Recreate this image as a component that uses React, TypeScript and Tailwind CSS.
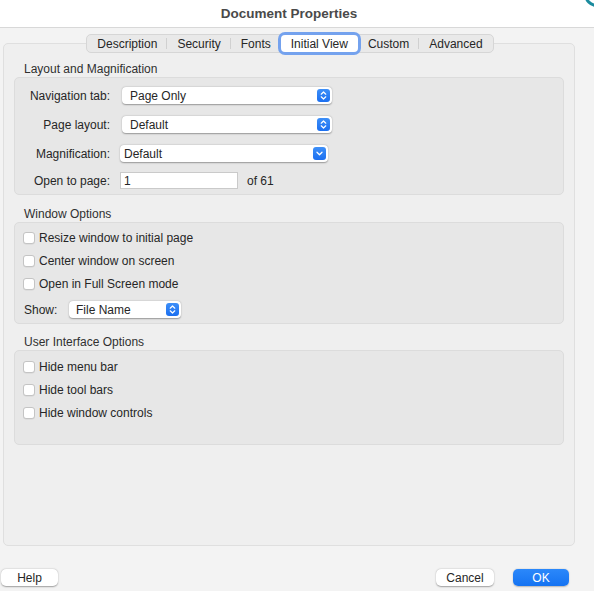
import type { ReactNode } from 'react';

const tabs = ['Description', 'Security', 'Fonts', 'Initial View', 'Custom', 'Advanced'];
const activeTab = 'Initial View';

function UpDownIcon() {
  return (
    <span className="flex h-[13px] w-[13px] items-center justify-center rounded-[3px] bg-gradient-to-b from-[#3d8ff8] to-[#1b6ff0]">
      <svg width="7" height="9" viewBox="0 0 7 9" fill="none">
        <path d="M1.2 3.2 L3.5 1 L5.8 3.2" stroke="white" strokeWidth="1.2" strokeLinecap="round" strokeLinejoin="round" />
        <path d="M1.2 5.8 L3.5 8 L5.8 5.8" stroke="white" strokeWidth="1.2" strokeLinecap="round" strokeLinejoin="round" />
      </svg>
    </span>
  );
}

function DownIcon() {
  return (
    <span className="flex h-[13px] w-[13px] items-center justify-center rounded-[3px] bg-gradient-to-b from-[#3d8ff8] to-[#1b6ff0]">
      <svg width="7" height="5" viewBox="0 0 7 5" fill="none">
        <path d="M1 1.3 L3.5 3.7 L6 1.3" stroke="white" strokeWidth="1.3" strokeLinecap="round" strokeLinejoin="round" />
      </svg>
    </span>
  );
}

function Select({ value, width, down, pad = 'pl-[8px]' }: { value: string; width: string; down?: boolean; pad?: string }) {
  return (
    <div
      className={`flex h-[17px] ${width} items-center justify-between rounded-[4px] bg-white ${pad} pr-[2px] shadow-[0_0.5px_1.5px_rgba(0,0,0,0.35)]`}
    >
      <span className="text-[12px] text-[#262626]">{value}</span>
      {down ? <DownIcon /> : <UpDownIcon />}
    </div>
  );
}

function Checkbox({ label, className = '' }: { label: string; className?: string }) {
  return (
    <div className={`flex h-[14px] items-center ${className}`}>
      <span className="h-[12px] w-[12px] rounded-[3px] border border-[#c4c4c4] bg-white shadow-[0_0.5px_0.5px_rgba(0,0,0,0.08)]" />
      <span className="ml-[4px] text-[12px] text-[#262626]">{label}</span>
    </div>
  );
}

function FieldRow({ label, children, className = '' }: { label: string; children: ReactNode; className?: string }) {
  return (
    <div className={`flex h-[17px] items-center ${className}`}>
      <span className="w-[95px] text-right text-[12px] text-[#262626]">{label}</span>
      {children}
    </div>
  );
}

function Group({ title, children, className = '' }: { title: string; children: ReactNode; className?: string }) {
  return (
    <div className={className}>
      <div className="ml-[10px] h-[14px] text-[12px] leading-[14px] text-[#303030]">{title}</div>
      <div className="mt-[1px] rounded-[5px] border border-[#dcdcdc] bg-[#e7e7e7]">{children}</div>
    </div>
  );
}

export default function App() {
  return (
    <div className="relative flex h-[591px] w-[594px] flex-col overflow-hidden bg-[#f3f3f3] font-['Liberation_Sans',Arial,sans-serif]">
      {/* stray window corner */}
      <div className="absolute right-[-16px] top-[-19px] h-[26px] w-[26px] rounded-full border-[3px] border-[#1b8b9e]" />

      {/* Title bar */}
      <div className="flex h-[28px] items-center justify-center border-b border-[#d8d8d8] bg-white pr-[16px] pt-[1px]">
        <span className="text-[13.5px] font-bold text-[#4a4a4a]">Document Properties</span>
      </div>

      {/* Tabs */}
      <div className="relative z-10 mt-[6px] -mb-[10px] flex justify-center pr-[14px]">
        <div className="flex h-[19px] items-center rounded-[5px] border border-[#d6d6d6] bg-[#e9e9e9]">
          {tabs.map((t, i) => {
            const isActive = t === activeTab;
            const nextActive = tabs[i + 1] === activeTab;
            const showSep = i < tabs.length - 1 && !isActive && !nextActive;
            return (
              <div key={t} className="relative flex h-full items-center">
                <span
                  className={`flex h-full items-center px-[10px] text-[12px] text-[#262626] ${
                    isActive ? 'rounded-[4px] bg-white ring-[3px] ring-[#74a2ee]' : ''
                  }`}
                >
                  {t}
                </span>
                {showSep && <span className="absolute right-0 h-[11px] w-px bg-[#d0d0d0]" />}
              </div>
            );
          })}
        </div>
      </div>

      {/* Tab panel */}
      <div className="ml-[3px] h-[503px] w-[572px] rounded-[5px] border border-[#dfdfdf] bg-[#efefef] px-[10px] pt-[18px]">
        <Group title="Layout and Magnification">
          <div className="h-[116px] pt-[9px]">
            <FieldRow label="Navigation tab:">
              <div className="ml-[12px]">
                <Select value="Page Only" width="w-[210px]" />
              </div>
            </FieldRow>
            <FieldRow label="Page layout:" className="mt-[12px]">
              <div className="ml-[12px]">
                <Select value="Default" width="w-[210px]" />
              </div>
            </FieldRow>
            <FieldRow label="Magnification:" className="mt-[12px]">
              <div className="ml-[10px]">
                <Select value="Default" width="w-[208px]" down pad="pl-[4px]" />
              </div>
            </FieldRow>
            <FieldRow label="Open to page:" className="mt-[10px]">
              <div className="ml-[10px] flex h-[17px] w-[118px] items-center border border-[#cacaca] bg-white pl-[3px] text-[12px] text-[#262626]">
                1
              </div>
              <span className="ml-[9px] text-[12px] text-[#262626]">of 61</span>
            </FieldRow>
          </div>
        </Group>

        <Group title="Window Options" className="mt-[12px]">
          <div className="h-[100px] pl-[8px] pt-[8px]">
            <Checkbox label="Resize window to initial page" />
            <Checkbox label="Center window on screen" className="mt-[9px]" />
            <Checkbox label="Open in Full Screen mode" className="mt-[9px]" />
            <div className="mt-[10px] flex h-[17px] items-center pl-[1px]">
              <span className="w-[45px] text-[12px] text-[#262626]">Show:</span>
              <Select value="File Name" width="w-[112px]" pad="pl-[7px]" />
            </div>
          </div>
        </Group>

        <Group title="User Interface Options" className="mt-[11px]">
          <div className="h-[93px] pl-[8px] pt-[9px]">
            <Checkbox label="Hide menu bar" />
            <Checkbox label="Hide tool bars" className="mt-[9px]" />
            <Checkbox label="Hide window controls" className="mt-[9px]" />
          </div>
        </Group>
      </div>

      {/* Footer buttons */}
      <div className="mt-[23px] flex items-center pl-[1px] pr-[25px]">
        <button className="h-[17px] w-[57px] rounded-[5px] bg-white text-[12px] text-[#262626] shadow-[0_0.5px_1.5px_rgba(0,0,0,0.35)]">
          Help
        </button>
        <div className="flex-1" />
        <button className="h-[17px] w-[58px] rounded-[5px] bg-white text-[12px] text-[#262626] shadow-[0_0.5px_1.5px_rgba(0,0,0,0.35)]">
          Cancel
        </button>
        <button className="ml-[19px] h-[17px] w-[56px] rounded-[5px] bg-gradient-to-b from-[#2b88fa] to-[#1473f2] text-[12px] text-white shadow-[0_0.5px_1.5px_rgba(0,0,0,0.25)]">
          OK
        </button>
      </div>
    </div>
  );
}
